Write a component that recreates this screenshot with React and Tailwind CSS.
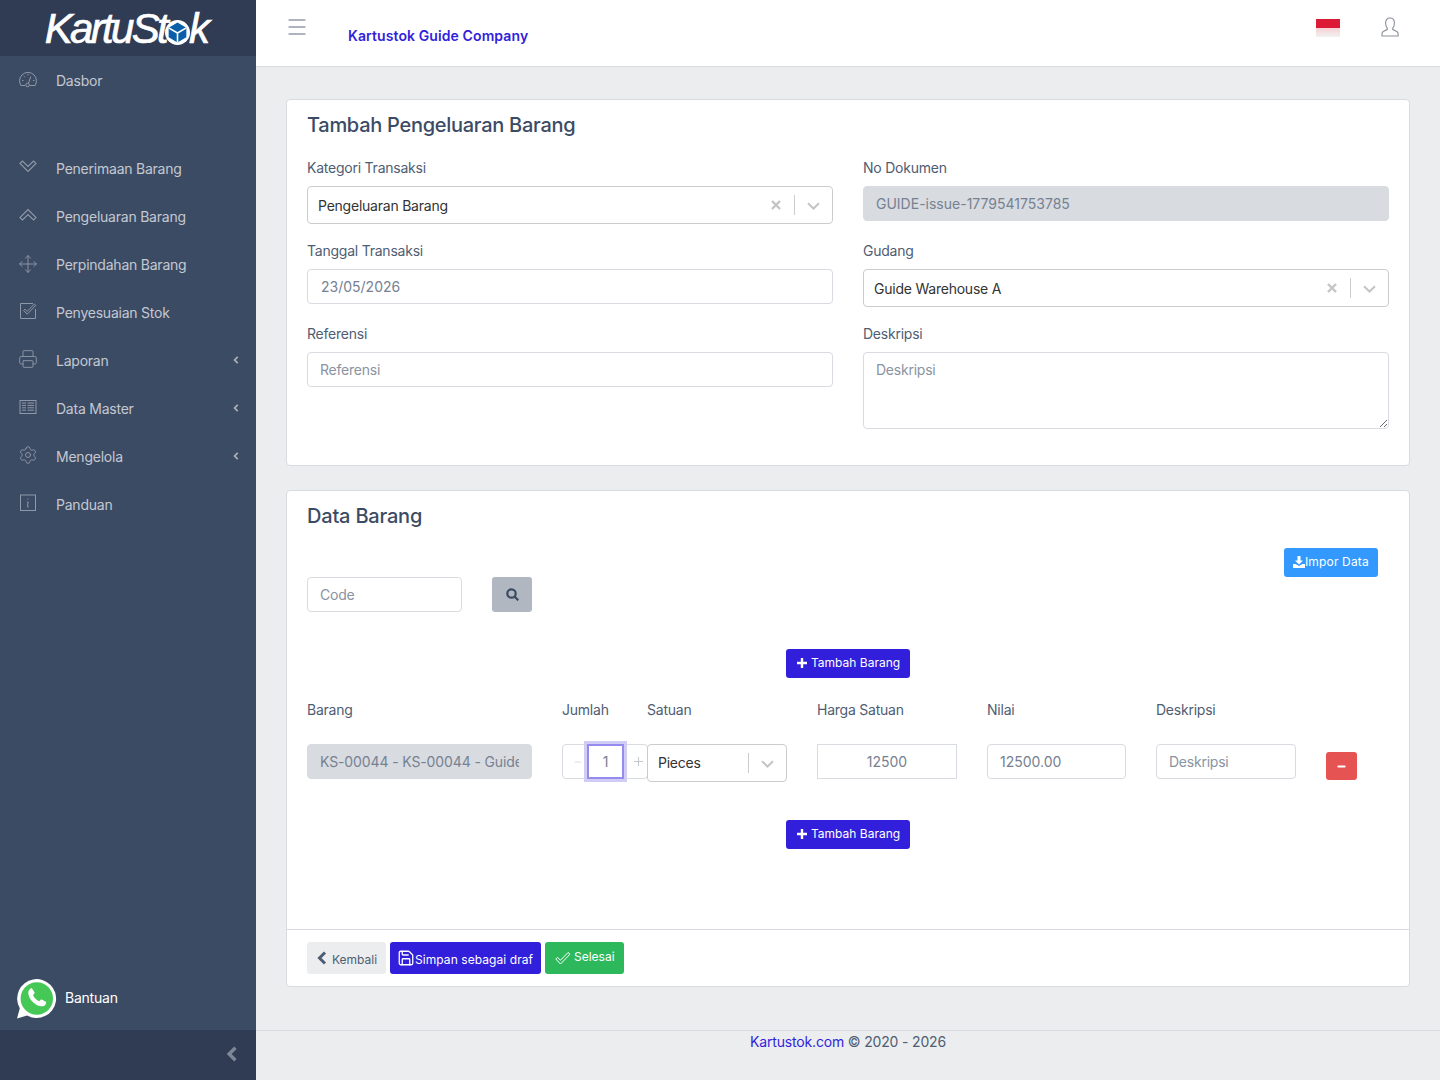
import { Menu, Move, Printer, Settings, Minus, Save } from 'lucide-react'

function Speedo({ className }) {
  return (
    <svg viewBox="0 0 18 18" fill="none" stroke="currentColor" strokeWidth="1" className={className}>
      <path d="M6 15.500H1.800C1 13.800.6 12.200.6 10.800a8.400 8.400 0 0 1 16.800 0c0 1.400-.4 3-1.200 4.700H11" />
      <circle cx="8.600" cy="15" r="1.800" />
      <path d="M9.400 13.400 11.800 6.500M3 10.500h1.400M14 10.500h1.400M5 6.200l1 1M9 4v1.400" />
    </svg>
  )
}

function Band({ className, up }) {
  return (
    <svg viewBox="0 0 18 18" fill="none" stroke="currentColor" strokeWidth="1.100" className={className}>
      {up ? (
        <path d="M1 11.500 3.500 14 9 8.500l5.500 5.500 2.500-2.500L9 3.500Z" />
      ) : (
        <path d="M1 5.500 3.500 3 9 8.500 14.500 3 17 5.500 9 13.500Z" />
      )}
    </svg>
  )
}

function CheckBox({ className }) {
  return (
    <svg viewBox="0 0 18 18" fill="none" stroke="currentColor" strokeWidth="1" className={className}>
      <path d="M14 1.500H1.500v15h15V7" />
      <path d="m4.500 8.500 1.400-1.400 2.300 2.300L15.400 2l1.400 1.400-8.600 8.800-3.700-3.700Z" />
    </svg>
  )
}

function TableIcon({ className }) {
  return (
    <svg viewBox="0 0 18 18" fill="none" stroke="currentColor" strokeWidth="1" className={className}>
      <rect x="1" y="2.500" width="16" height="13" />
      <path d="M3 5h4M3 7.400h4M3 9.800h4M3 12.200h4M8.500 5h6.500M8.500 7.400h6.500M8.500 9.800h6.500M8.500 12.200h6.500" />
    </svg>
  )
}

function InfoBox({ className }) {
  return (
    <svg viewBox="0 0 18 18" fill="none" stroke="currentColor" strokeWidth="1" className={className}>
      <rect x="1.500" y="1" width="15" height="15.500" />
      <path d="M8 8h1.200L8.400 12.600c0 .6.500.6 1.400.1M9 4.600v1" />
    </svg>
  )
}

function UserIcon({ className }) {
  return (
    <svg viewBox="0 0 18 20" fill="none" stroke="currentColor" strokeWidth="1.100" className={className}>
      <path d="M6.200 12.600V11C5 9.800 4.600 8.400 4.600 6c0-3.200 1.800-5 4.400-5s4.400 1.800 4.400 5c0 2.400-.4 3.800-1.600 5v1.600l4 2c.9.500 1.300 1.100 1.300 2.100V19H1v-2.300c0-1 .4-1.600 1.300-2.100l3.900-2Z" />
    </svg>
  )
}

function ChevLeft({ className, width = 3 }) {
  return (
    <svg viewBox="0 0 10 14" fill="none" stroke="currentColor" strokeWidth={width} className={className}>
      <path d="M8 1.500 2.500 7 8 12.500" />
    </svg>
  )
}

function ChevDown() {
  return (
    <svg viewBox="0 0 13 8" fill="none" stroke="#c4c4c4" strokeWidth="2" className="mx-[12px] mt-[2px] h-[8px] w-[13px] shrink-0">
      <path d="M1 1.200 6.500 6.500 12 1.200" />
    </svg>
  )
}

function CrossIcon() {
  return (
    <svg viewBox="0 0 10 10" fill="none" stroke="#c4c4c4" strokeWidth="2.400" className="mr-[13px] h-[10px] w-[10px] shrink-0">
      <path d="M1 1l8 8M9 1l-8 8" />
    </svg>
  )
}

function PlusIcon() {
  return (
    <svg viewBox="0 0 10 10" fill="currentColor" className="mb-[2px] h-[10px] w-[10px] shrink-0">
      <path d="M3.800 0h2.400v3.800H10v2.400H6.200V10H3.800V6.200H0V3.800h3.800V0Z" />
    </svg>
  )
}

function WhatsApp() {
  return (
    <svg viewBox="0 0 40 40" className="ml-[-1px] h-[41px] w-[41px] shrink-0">
      <path d="M1 39.500 3.700 29.600A19 19 0 1 1 10.800 36.600L1 39.500Z" fill="#fff" />
      <circle cx="20.300" cy="20" r="15.800" fill="#45c855" />
      <path d="M13.800 10.600c.7-.6 1.500-.7 2-.2l2.200 3.400c.3.500.2 1-.2 1.500l-1.200 1.400c1 2.600 3 4.700 6 6.100l1.500-1.500c.5-.4 1-.5 1.500-.2l3.400 2c.5.3.6 1 .3 1.700-.8 2-2.800 3.200-5 2.800-6.300-1.200-11.400-6.500-12.300-12.500-.2-1.700.6-3.100 1.800-4.500Z" fill="#fff" />
    </svg>
  )
}

function Logo() {
  return (
    <div className="flex items-center text-white italic font-['Liberation_Sans',sans-serif] text-[42px] leading-none tracking-[-2.700px] [-webkit-text-stroke:0.7px_white]">
      <span>KartuSt</span>
      <svg viewBox="0 0 24 24" className="mx-[-1px] mt-[7px] h-[25px] w-[25px] shrink-0">
        <circle cx="12" cy="12" r="12" fill="#fff" />
        <path d="M12 2.500 20.500 7.500v9L12 21.500l-8.500-5v-9Z" fill="#0a5fa8" />
        <path d="M3.500 7.500 12 12.500l8.500-5M12 12.500v9" stroke="#fff" strokeWidth="1.500" fill="none" />
      </svg>
      <span>k</span>
    </div>
  )
}

const NAV = [
  { label: 'Penerimaan Barang', icon: <Band className="h-[18px] w-[18px]" /> },
  { label: 'Pengeluaran Barang', icon: <Band up className="h-[18px] w-[18px]" /> },
  { label: 'Perpindahan Barang', icon: <Move strokeWidth={1.100} className="ml-[-1px] mt-[1px] h-[20px] w-[20px]" /> },
  { label: 'Penyesuaian Stok', icon: <CheckBox className="h-[18px] w-[18px]" /> },
  { label: 'Laporan', icon: <Printer strokeWidth={1.100} className="ml-[-1px] h-[20px] w-[20px]" />, sub: true },
  { label: 'Data Master', icon: <TableIcon className="h-[18px] w-[18px]" />, sub: true },
  { label: 'Mengelola', icon: <Settings strokeWidth={1.100} className="ml-[-1px] h-[20px] w-[20px]" />, sub: true },
  { label: 'Panduan', icon: <InfoBox className="h-[18px] w-[18px]" /> },
]

function NavItem({ item }) {
  return (
    <div className="flex h-12 items-center pl-[19px] pr-[17px] text-[#c3c8d1]">
      <span className="mt-[-4px] w-[37px] shrink-0 text-[#8f98a7]">{item.icon}</span>
      <span className="flex-1 pb-[2px]">{item.label}</span>
      {item.sub && <ChevLeft className="mt-[-3px] h-[8px] w-[6px] text-[#aab0bb]" />}
    </div>
  )
}

function Sidebar() {
  return (
    <aside className="flex w-64 shrink-0 flex-col bg-[#3c4b64]">
      <div className="flex h-14 items-center justify-center bg-[#303c54] pr-[4px] pt-[2px]">
        <Logo />
      </div>
      <div className="flex-1 pt-[1px]">
        <div className="mb-10">
          <NavItem item={{ label: 'Dasbor', icon: <Speedo className="h-[18px] w-[18px]" /> }} />
        </div>
        {NAV.map((n) => (
          <NavItem key={n.label} item={n} />
        ))}
      </div>
      <div className="flex h-[68px] items-center gap-2 pl-[17px] pt-[5px] text-white">
        <WhatsApp />
        <span className="pb-[2px]">Bantuan</span>
      </div>
      <div className="flex h-[50px] items-center justify-end bg-[#303c54] pb-[2px] pr-[18px]">
        <ChevLeft className="h-[16px] w-[12px] text-[#7d8798]" />
      </div>
    </aside>
  )
}

function Field({ label, children }) {
  return (
    <div>
      <div className="mb-2 h-[21px] leading-[21px] text-[#4f5d73]">{label}</div>
      {children}
    </div>
  )
}

const inputCls = 'block w-full h-[35px] rounded border border-[#d8dbe0] bg-white px-3 text-[#768192] placeholder:text-[#8a93a2] outline-none'

function Picker({ value, clear = true, textClass = '' }) {
  return (
    <div className="flex h-[38px] items-center rounded border border-[#ccc] bg-white pl-[10px] text-[#333]">
      <span className={`flex-1 truncate ${textClass}`}>{value}</span>
      {clear && <CrossIcon />}
      <span className="h-[20px] w-px bg-[#ccc]" />
      <ChevDown />
    </div>
  )
}

function AddButton() {
  return (
    <div className="flex justify-center">
      <button className="flex h-[29px] w-[124px] items-center gap-[4px] rounded-[3px] bg-[#321fdb] pl-[11px] text-[12px] tracking-normal text-white">
        <PlusIcon />
        <span className="pb-[2px]">Tambah Barang</span>
      </button>
    </div>
  )
}

function Stepper() {
  return (
    <div className="flex h-[35px] w-[86px] items-center rounded border border-[#d8dbe0] text-[#c4c9d0]">
      <span className="flex w-[24px] justify-center pl-[6px]">
        <Minus strokeWidth={1.500} className="h-[10px] w-[10px]" />
      </span>
      <span className="flex h-[35px] w-[37px] shrink-0 items-center justify-center border-2 border-[#958bef] bg-white text-[#768192] shadow-[0_0_0_3px_#d0ccf5]">
        1
      </span>
      <span className="flex flex-1 justify-center pl-[6px]">
        <PlusThin />
      </span>
    </div>
  )
}

function PlusThin() {
  return (
    <svg viewBox="0 0 10 10" fill="none" stroke="currentColor" strokeWidth="1.200" className="h-[9px] w-[9px]">
      <path d="M5 0v10M0 5h10" />
    </svg>
  )
}

export default function App() {
  return (
    <div className="flex min-h-[1080px] bg-[#ebedef] font-['Inter',sans-serif] text-[14px] tracking-[-0.23px] text-[#4f5d73]">
      <Sidebar />
      <div className="flex min-w-0 flex-1 flex-col">
        <header className="flex h-[67px] items-start border-b border-[#d8dbe0] bg-white">
          <Menu strokeWidth={1.100} className="ml-[29px] mt-[15px] h-[24px] w-[24px] text-[#5f6b7e]" />
          <span className="ml-[39px] mt-[26px] font-semibold leading-[20px] tracking-[0.1px] text-[#321fdb]">Kartustok Guide Company</span>
          <div className="ml-auto mr-[41px] mt-[17px] flex items-start gap-[41px]">
            <div className="mt-[2px] h-[18px] w-[24px]">
              <div className="h-[9px] bg-[#dc1a35]" />
              <div className="h-[9px] bg-gradient-to-b from-[#f6d0d4] to-[#f2f2f2]" />
            </div>
            <UserIcon className="h-[20px] w-[18px] text-[#8a8f99]" />
          </div>
        </header>

        <main className="flex-1 px-[30px] pt-[32px]">
          <section className="h-[367px] rounded border border-[#d8dbe0] bg-white px-[20px] pt-[13px]">
            <h2 className="mb-[20px] h-[24px] text-[20px] font-medium leading-[24px] tracking-[-0.28px] text-[#3c4b64]">Tambah Pengeluaran Barang</h2>
            <div className="grid grid-cols-2 gap-x-[30px]">
              <div>
                <Field label="Kategori Transaksi">
                  <Picker value="Pengeluaran Barang" />
                </Field>
                <div className="mt-[16px]">
                  <Field label="Tanggal Transaksi">
                    <input readOnly value="23/05/2026" className={`${inputCls} !px-[13px] tracking-normal`} />
                  </Field>
                </div>
                <div className="mt-[19px]">
                  <Field label="Referensi">
                    <input className={inputCls} placeholder="Referensi" />
                  </Field>
                </div>
              </div>
              <div>
                <Field label="No Dokumen">
                  <input readOnly value="GUIDE-issue-1779541753785" className={`${inputCls} !border-[#d8dbe0] !bg-[#d8dbe0] !px-[12px] tracking-normal`} />
                </Field>
                <div className="mt-[19px]">
                  <Field label="Gudang">
                    <Picker value="Guide Warehouse A" />
                  </Field>
                </div>
                <div className="mt-[16px]">
                  <Field label="Deskripsi">
                    <textarea className="block h-[77px] w-full rounded border border-[#d8dbe0] bg-white px-3 py-[6px] text-[#768192] outline-none placeholder:text-[#8a93a2]" placeholder="Deskripsi" />
                  </Field>
                </div>
              </div>
            </div>
          </section>

          <section className="mt-[24px] flex h-[497px] flex-col rounded border border-[#d8dbe0] bg-white">
            <div className="flex-1 px-[20px] pt-[13px]">
              <h2 className="h-[24px] text-[20px] font-medium leading-[24px] tracking-[-0.2px] text-[#3c4b64]">Data Barang</h2>
              <div className="mt-[20px] flex justify-end pr-[11px]">
                <button className="flex h-[29px] w-[94px] items-center rounded-[3px] bg-[#3399ff] pl-[9px] text-[12px] tracking-[0.15px] text-white">
                  <svg viewBox="0 0 12 12" fill="currentColor" className="mb-[2px] h-[12px] w-[12px] shrink-0">
                    <path d="M4.500 0h3v4.500H10L6 8.500 2 4.500h2.500V0ZM0 8h2.500L6 10l3.500-2H12v4H0V8Z" />
                  </svg>
                  <span className="pb-[2px]">Impor Data</span>
                </button>
              </div>
              <div className="flex gap-[30px]">
                <input className={`${inputCls} !w-[155px]`} placeholder="Code" />
                <button className="flex h-[35px] w-[40px] items-center justify-center rounded-[3px] bg-[#b1b7c1] text-[#3c4b64]">
                  <svg viewBox="0 0 13 13" fill="none" stroke="currentColor" strokeWidth="2.200" className="h-[13px] w-[13px]">
                    <circle cx="5.500" cy="5.500" r="4.200" />
                    <path d="m8.500 8.500 3.800 3.800" />
                  </svg>
                </button>
              </div>
              <div className="mt-[37px]"><AddButton /></div>
              <div className="mt-[21px] grid grid-cols-[225px_55px_140px_140px_139px_140px_31px] gap-x-[30px] leading-[21px]">
                <div>Barang</div>
                <div>Jumlah</div>
                <div>Satuan</div>
                <div>Harga Satuan</div>
                <div>Nilai</div>
                <div>Deskripsi</div>
                <div />
              </div>
              <div className="mt-[24px] grid grid-cols-[225px_55px_140px_140px_139px_140px_31px] items-start gap-x-[30px]">
                <input readOnly value="KS-00044 - KS-00044 - Guide Item" className={`${inputCls} !border-[#d8dbe0] !bg-[#d8dbe0] tracking-[-0.12px]`} />
                <Stepper />
                <Picker value="Pieces" clear={false} textClass="pb-[2px]" />
                <div className="flex h-[35px] items-center justify-center border border-[#d8dbe0] tracking-normal text-[#768192]">12500</div>
                <input className={`${inputCls} tracking-normal`} defaultValue="12500.00" />
                <input className={inputCls} placeholder="Deskripsi" />
                <button className="mt-[8px] flex h-[28px] w-[31px] items-center justify-center rounded-[3px] bg-[#e55353] text-white">
                  <Minus strokeWidth={4} className="h-[11px] w-[11px]" />
                </button>
              </div>
              <div className="mt-[38px]"><AddButton /></div>
            </div>
            <div className="flex h-[57px] items-start gap-1 border-t border-[#d8dbe0] px-[20px] pt-[12px] text-[12px] tracking-normal">
              <button className="flex h-[32px] w-[79px] items-center gap-[5px] rounded-[3px] bg-[#ebedef] pl-[10px] text-[#4f5d73]">
                <ChevLeft className="h-[14px] w-[10px]" />
                <span className="mt-[3px]">Kembali</span>
              </button>
              <button className="flex h-[32px] w-[151px] items-center rounded-[3px] bg-[#321fdb] pl-[7px] text-white">
                <Save strokeWidth={1.700} className="h-[18px] w-[18px]" />
                <span className="mt-[3px] tracking-[0.07px]">Simpan sebagai draf</span>
              </button>
              <button className="flex h-[32px] w-[79px] items-center gap-[3px] rounded-[3px] bg-[#2eb85c] pl-[10px] text-white">
                <svg viewBox="0 0 16 14" fill="none" stroke="currentColor" strokeWidth="1" className="h-[14px] w-[16px] shrink-0">
                  <path d="m.8 8 1.700-1.700 3 3L13 1.500 15 3.200 5.500 13 .8 8Z" />
                </svg>
                <span className="-mt-[2px]">Selesai</span>
              </button>
            </div>
          </section>
        </main>

        <footer className="mt-[43px] h-[50px] border-t border-[#d8dbe0] text-center leading-[21px] tracking-[-0.17px] text-[#4f5d73]">
          <span className="text-[#321fdb]">Kartustok.com</span> © 2020 - 2026
        </footer>
      </div>
    </div>
  )
}
